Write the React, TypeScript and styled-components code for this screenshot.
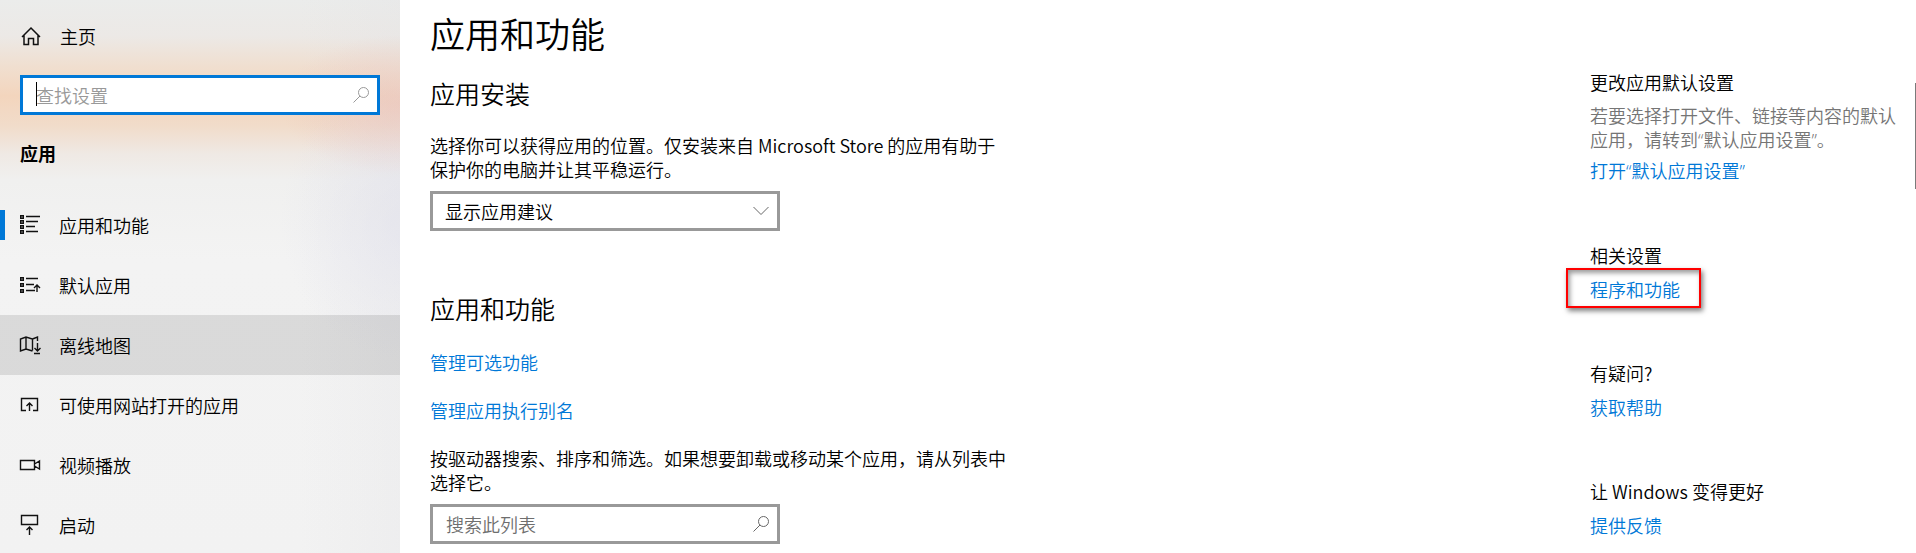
import React from 'react';
import styled, { createGlobalStyle } from 'styled-components';

const GlobalStyle = createGlobalStyle`
  *, *::before, *::after { box-sizing: border-box; }
  body {
    margin: 0;
    background: #fff;
    color: #000;
    font: 350 18px/24px "Noto Sans CJK SC", sans-serif;
    overflow: hidden;
  }
  h1, h2, h3, p, ul { margin: 0; padding: 0; font-size: inherit; font-weight: inherit; }
`;

const Page = styled.div`
  display: flex;
  height: 100vh;
  overflow: hidden;
`;

const Sidebar = styled.aside`
  flex: 0 0 400px;
  overflow: hidden;
  background:
    radial-gradient(ellipse 120px 70px at 400px 105px, rgba(236, 190, 182, 0.5), transparent),
    radial-gradient(ellipse 130px 140px at 410px 220px, rgba(222, 222, 236, 0.5), transparent),
    linear-gradient(90deg, transparent 75%, rgba(225, 225, 228, 0.25)),
    linear-gradient(180deg, #ebeceb 0, #ece9e6 36px, #f0dfd0 66px, #f3d5bd 96px, #f1dcca 126px, #efe9e4 154px, #f0f0ef 180px, #f3f3f3 260px, #f2f2f2 100%);
`;

const HomeLink = styled.a`
  display: flex;
  align-items: center;
  gap: 19px;
  height: 75px;
  padding: 0 21px 4px;
  color: inherit;
  text-decoration: none;
`;

const Field = styled.div<{ $focused?: boolean }>`
  position: relative;
  display: flex;
  align-items: center;
  height: 40px;
  border: 3px solid ${p => (p.$focused ? '#0078d7' : '#999')};
  background: #fff;
  color: ${p => (p.$focused ? '#999' : '#666')};
`;

const SidebarSearch = styled.div`
  padding: 0 20px;
`;

const TextInput = styled.input<{ $muted?: boolean }>`
  flex: 1;
  min-width: 0;
  height: 34px;
  padding: 0 12px 0 13px;
  border: 0;
  outline: 0;
  background: transparent;
  color: #000;
  font: inherit;
  &::placeholder {
    color: ${p => (p.$muted ? '#999' : '#6e6e6e')};
    opacity: 1;
  }
`;

const Caret = styled.span`
  position: absolute;
  left: 13px;
  top: 4px;
  width: 1px;
  height: 24px;
  background: #000;
`;

const FieldIcon = styled.svg`
  flex: none;
  margin-right: 8px;
  fill: none;
  stroke: currentColor;
  pointer-events: none;
`;

const GroupTitle = styled.h2`
  padding: 26px 20px 30px;
  font-weight: 700;
`;

const NavList = styled.ul`
  list-style: none;
`;

const NavLink = styled.a<{ $selected?: boolean; $hovered?: boolean }>`
  display: flex;
  align-items: center;
  height: 60px;
  padding-right: 20px;
  color: inherit;
  text-decoration: none;
  background: ${p => (p.$hovered ? 'rgba(0, 0, 0, 0.1)' : 'transparent')};
  &::before {
    content: '';
    width: 5px;
    height: 30px;
    background: ${p => (p.$selected ? '#0078d7' : 'transparent')};
  }
  svg { margin: 0 19px 0 15px; }
`;

const Icon = styled.svg`
  flex: none;
  fill: none;
  stroke: #111;
`;

const Main = styled.main`
  flex: 1;
  min-width: 0;
  padding: 8px 30px 0;
`;

const PageTitle = styled.h1`
  font-size: 35px;
  line-height: 50px;
`;

const SectionTitle = styled.h2<{ $spaced?: boolean }>`
  margin-top: ${p => (p.$spaced ? 59 : 17)}px;
  font-size: 25px;
  line-height: 36px;
`;

const Paragraph = styled.p`
  max-width: 580px;
  margin: 22px 0 10px;
`;

const Control = styled.div`
  width: 350px;
  max-width: 100%;
`;

const Select = styled.select`
  flex: 1;
  height: 34px;
  margin-right: -24px;
  padding: 0 30px 0 12px;
  border: 0;
  outline: 0;
  appearance: none;
  background: transparent;
  color: #000;
  font: inherit;
`;

const Link = styled.a`
  color: #0078d7;
  text-decoration: none;
`;

const LinkRow = styled.p`
  margin: 24px 0;
`;

const Aside = styled.aside`
  display: flex;
  flex-direction: column;
  gap: 60px;
  flex: 0 0 326px;
  padding: 70px 14px 0 0;
`;

const AsideGroup = styled.section`
  display: flex;
  flex-direction: column;
  align-items: flex-start;
`;

const AsideTitle = styled.h3`
  margin-bottom: 10px;
`;

const Hint = styled.p`
  margin-bottom: 7px;
  color: #757575;
  font-family: "Open Sans", "Noto Sans CJK SC", sans-serif;
`;

const HintLink = styled(Link)`
  font-family: "Open Sans", "Noto Sans CJK SC", sans-serif;
`;

const Marked = styled.span`
  position: relative;
  &::after {
    content: '';
    position: absolute;
    inset: -9px -21px -7px -24px;
    border: 2px solid #f00;
    box-shadow: 2px 3px 5px rgba(0, 0, 0, 0.5), inset 2px 3px 5px rgba(0, 0, 0, 0.4);
    pointer-events: none;
  }
`;

const ScrollThumb = styled.div`
  position: absolute;
  top: 83px;
  right: 0;
  width: 1px;
  height: 106px;
  background: #7a7a7a;
`;

const Magnifier = () => (
  <FieldIcon width="16" height="16" viewBox="0 0 16 16" aria-hidden="true">
    <circle cx="10.5" cy="5.5" r="5" />
    <path d="M7 9L.5 15.5" />
  </FieldIcon>
);

const Bullets = ({ rows }: { rows: number[] }) => (
  <>
    {rows.map(y => (
      <rect key={y} x="0.75" y={y + 0.75} width="2.5" height="2.5" strokeWidth="1.5" />
    ))}
  </>
);

const navItems = [
  {
    label: '应用和功能',
    selected: true,
    icon: <><Bullets rows={[0, 5, 10, 15]} /><path strokeWidth="1.4" d="M6 1.500h14M6 6.500h12M6 11.500h9M6 16.500h12" /></>,
  },
  {
    label: '默认应用',
    icon: <><Bullets rows={[2, 8, 14]} /><path strokeWidth="1.4" d="M6 3.500h12M6 9.500h8M6 15.500h9M17 17V9.500M14 13l3-3 3 3" /></>,
  },
  {
    label: '离线地图',
    hovered: true,
    icon: <path strokeWidth="1.4" d="M12.500 15.500V4L6 2 .5 4v12L6 14l6.500 2M6 2v12M12.500 4l5-2v4M17.500 8v8M14.500 13l3 3 3-3M14 18.500h6" />,
  },
  {
    label: '可使用网站打开的应用',
    icon: <path strokeWidth="1.4" d="M6 15.500H1.500v-12h16v12H13M9.500 16V8M6.500 11l3-3 3 3" />,
  },
  {
    label: '视频播放',
    icon: <path strokeWidth="1.4" d="M.5 5.500h14v9H.5zM14.500 9l5-3v8l-5-3" />,
  },
  {
    label: '启动',
    icon: <path strokeWidth="1.4" d="M1.500.5h16v9h-16zM9.500 20v-8M6.500 15l3-3 3 3" />,
  },
];

export default function App() {
  return (
    <>
      <GlobalStyle />
      <Page>
        <Sidebar>
          <HomeLink href="#home">
            <Icon width="20" height="20" viewBox="0 0 20 20" strokeWidth="1.5" aria-hidden="true">
              <path d="M1 11L10 2l9 9M3 9.500v9h4.500v-6h5v6H17v-9" />
            </Icon>
            主页
          </HomeLink>
          <SidebarSearch>
            <Field $focused>
              <TextInput $muted type="text" placeholder="查找设置" aria-label="查找设置" />
              <Caret />
              <Magnifier />
            </Field>
          </SidebarSearch>
          <GroupTitle>应用</GroupTitle>
          <nav>
            <NavList>
              {navItems.map(item => (
                <li key={item.label}>
                  <NavLink href="#" $selected={item.selected} $hovered={item.hovered}>
                    <Icon width="20" height="20" viewBox="0 0 20 20" overflow="visible" aria-hidden="true">
                      {item.icon}
                    </Icon>
                    {item.label}
                  </NavLink>
                </li>
              ))}
            </NavList>
          </nav>
        </Sidebar>

        <Main>
          <PageTitle>应用和功能</PageTitle>
          <SectionTitle>应用安装</SectionTitle>
          <Paragraph>
            选择你可以获得应用的位置。仅安装来自 Microsoft Store 的应用有助于保护你的电脑并让其平稳运行。
          </Paragraph>
          <Control>
            <Field>
              <Select aria-label="应用安装">
                <option>显示应用建议</option>
              </Select>
              <FieldIcon width="16" height="10" viewBox="0 0 16 10" aria-hidden="true">
                <path d="M.5 1L8 8.500 15.500 1" />
              </FieldIcon>
            </Field>
          </Control>

          <SectionTitle $spaced>应用和功能</SectionTitle>
          <LinkRow><Link href="#optional">管理可选功能</Link></LinkRow>
          <LinkRow><Link href="#aliases">管理应用执行别名</Link></LinkRow>
          <Paragraph>
            按驱动器搜索、排序和筛选。如果想要卸载或移动某个应用，请从列表中选择它。
          </Paragraph>
          <Control>
            <Field>
              <TextInput type="text" placeholder="搜索此列表" aria-label="搜索此列表" />
              <Magnifier />
            </Field>
          </Control>
        </Main>

        <Aside>
          <AsideGroup>
            <AsideTitle>更改应用默认设置</AsideTitle>
            <Hint>若要选择打开文件、链接等内容的默认应用，请转到“默认应用设置”。</Hint>
            <HintLink href="#defaults">打开“默认应用设置”</HintLink>
          </AsideGroup>
          <AsideGroup>
            <AsideTitle>相关设置</AsideTitle>
            <Marked><Link href="#programs">程序和功能</Link></Marked>
          </AsideGroup>
          <AsideGroup>
            <AsideTitle>有疑问?</AsideTitle>
            <Link href="#help">获取帮助</Link>
          </AsideGroup>
          <AsideGroup>
            <AsideTitle>让 Windows 变得更好</AsideTitle>
            <Link href="#feedback">提供反馈</Link>
          </AsideGroup>
        </Aside>
        <ScrollThumb />
      </Page>
    </>
  );
}
